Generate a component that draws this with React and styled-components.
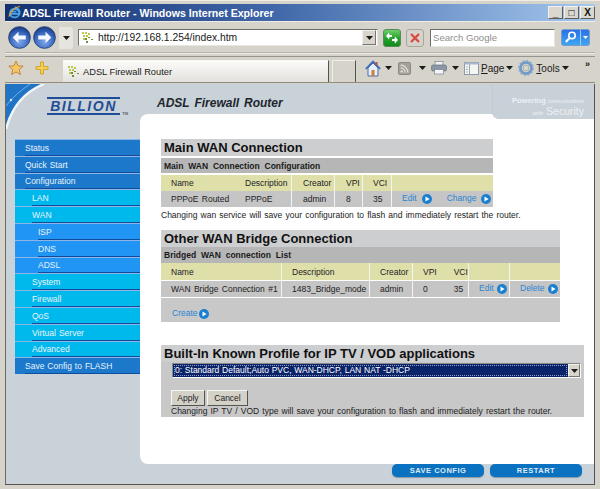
import React from 'react'
import styled, { createGlobalStyle } from 'styled-components'

const Global = createGlobalStyle`
  html, body { margin: 0; padding: 0; background: #d6d3cb; }
  * { box-sizing: border-box; }
`

const sans = `"Liberation Sans", Arial, sans-serif`

function Favicon() {
  return (
    <svg width="12" height="12" viewBox="0 0 12 12">
      <g fill="#b9c94a">
        <rect x="0" y="0" width="2" height="2" /><rect x="3" y="0" width="2" height="2" /><rect x="6" y="1" width="2" height="2" />
        <rect x="1" y="3" width="2" height="2" /><rect x="4" y="3" width="2" height="2" /><rect x="1" y="6" width="2" height="2" />
      </g>
      <g fill="#6f8f3a">
        <rect x="3" y="6" width="2" height="2" /><rect x="6" y="5" width="2" height="1" /><rect x="4" y="9" width="2" height="2" /><rect x="9" y="7" width="2" height="1" />
      </g>
    </svg>
  )
}

function RoundArrow({ dir }) {
  const d = dir === 'back' ? 'M4.5 11 L10 5.5 V9 H17 V13 H10 V16.5 Z' : 'M17.5 11 L12 5.5 V9 H5 V13 H12 V16.5 Z'
  return (
    <svg width="23" height="23" viewBox="0 0 22 22">
      <defs>
        <radialGradient id={`nav-${dir}`} cx="50%" cy="70%" r="65%">
          <stop offset="0" stopColor="#7fa6e8" />
          <stop offset="0.6" stopColor="#3f6fc4" />
          <stop offset="1" stopColor="#1c3f8c" />
        </radialGradient>
      </defs>
      <circle cx="11" cy="11" r="10.4" fill={`url(#nav-${dir})`} stroke="#28406f" strokeWidth="0.8" />
      <path d={d} fill="#f4f7fc" />
    </svg>
  )
}

function Refresh() {
  return (
    <svg width="18" height="18" viewBox="0 0 18 18">
      <defs>
        <linearGradient id="go" x1="0" y1="0" x2="0" y2="1">
          <stop offset="0" stopColor="#74d06c" />
          <stop offset="0.5" stopColor="#26a52c" />
          <stop offset="1" stopColor="#0f8a1c" />
        </linearGradient>
      </defs>
      <rect x="0.5" y="0.5" width="17" height="17" rx="2.5" fill="url(#go)" stroke="#5a8a5a" />
      <path d="M3 7 L6 3.5 L6.5 6 H9 V8 H6.5 L6 10.5 Z M15 11 L12 14.5 L11.5 12 H9 V10 H11.5 L12 7.5 Z" fill="#fff" />
    </svg>
  )
}

function Stop() {
  return (
    <svg width="18" height="18" viewBox="0 0 18 18">
      <rect x="0.5" y="0.5" width="17" height="17" rx="2.5" fill="#d6d2cc" stroke="#a9a59d" />
      <path d="M5 5 L13 13 M13 5 L5 13" stroke="#d9483c" strokeWidth="2.2" />
    </svg>
  )
}

function SearchGo() {
  return (
    <svg width="29" height="17" viewBox="0 0 29 17">
      <defs>
        <linearGradient id="sg" x1="0" y1="0" x2="0" y2="1">
          <stop offset="0" stopColor="#2a6fe8" />
          <stop offset="1" stopColor="#3ea8f0" />
        </linearGradient>
      </defs>
      <rect x="0.5" y="0.5" width="28" height="16" rx="2" fill="url(#sg)" stroke="#7a9ccc" />
      <path d="M19.5 0.5 V16.5" stroke="#a8c8ee" />
      <circle cx="11" cy="6.5" r="3.2" fill="none" stroke="#fff" strokeWidth="1.6" />
      <path d="M8.6 9 L4.8 13" stroke="#fff" strokeWidth="2" />
      <path d="M22 7 H27 L24.5 10 Z" fill="#fff" />
    </svg>
  )
}

function Star() {
  return (
    <svg width="16" height="16" viewBox="0 0 16 16">
      <path d="M8 1 L10 5.8 L15.2 6.2 L11.2 9.5 L12.5 14.6 L8 11.9 L3.5 14.6 L4.8 9.5 L0.8 6.2 L6 5.8 Z" fill="#f5c76a" stroke="#c4802a" strokeWidth="0.9" />
    </svg>
  )
}

function Plus() {
  return (
    <svg width="14" height="14" viewBox="0 0 14 14">
      <path d="M5.5 1 H8.5 V5.5 H13 V8.5 H8.5 V13 H5.5 V8.5 H1 V5.5 H5.5 Z" fill="#f7cf4e" stroke="#c99a24" strokeWidth="0.8" />
    </svg>
  )
}

function Home() {
  return (
    <svg width="16" height="17" viewBox="0 0 16 17">
      <path d="M3 8 V16 H13 V8 L8 3 Z" fill="#e8eef8" stroke="#4a6aa8" />
      <path d="M0.8 9 L8 1.5 L15.2 9" fill="none" stroke="#3f6cb8" strokeWidth="1.8" />
      <rect x="6.5" y="10" width="3" height="6" fill="#c9803a" />
      <rect x="10.5" y="2" width="2" height="3.5" fill="#b8523a" />
    </svg>
  )
}

function Feed() {
  return (
    <svg width="13" height="13" viewBox="0 0 13 13">
      <rect x="0.5" y="0.5" width="12" height="12" rx="1.5" fill="#a5a29b" stroke="#8d8a83" />
      <circle cx="3.8" cy="9.4" r="1.2" fill="#e3e1db" />
      <path d="M2.6 5.8 A4.6 4.6 0 0 1 7.2 10.4 M2.6 3.2 A7.2 7.2 0 0 1 9.8 10.4" fill="none" stroke="#e3e1db" strokeWidth="1.2" />
    </svg>
  )
}

function Printer() {
  return (
    <svg width="16" height="14" viewBox="0 0 16 14">
      <rect x="4" y="0.5" width="8" height="4" fill="#eef0f2" stroke="#7d8792" strokeWidth="0.7" />
      <rect x="0.5" y="4" width="15" height="6" rx="1.5" fill="#8c97a5" stroke="#687280" strokeWidth="0.7" />
      <rect x="3.5" y="8.5" width="9" height="4.5" fill="#f4f5f7" stroke="#7d8792" strokeWidth="0.7" />
    </svg>
  )
}

function PageIcon() {
  return (
    <svg width="15" height="13" viewBox="0 0 15 13">
      <rect x="0.5" y="0.5" width="14" height="12" fill="#f5f5f2" stroke="#8f9aa8" />
      <rect x="0.5" y="0.5" width="14" height="2" fill="#a9b8cc" />
      <path d="M5.5 2.5 V12.5" stroke="#9aa5b2" />
      <path d="M2 5 H4 M2 7.5 H4 M2 10 H4" stroke="#a9b2bc" />
    </svg>
  )
}

function Gear() {
  return (
    <svg width="16" height="16" viewBox="0 0 16 16">
      <circle cx="8" cy="8" r="5.6" fill="none" stroke="#6f98c8" strokeWidth="2.6" />
      <circle cx="8" cy="8" r="7" fill="none" stroke="#8aa8cc" strokeWidth="1.8" strokeDasharray="2 1.66" />
      <circle cx="8" cy="8" r="3" fill="#d6d3cb" stroke="#8d9aa8" strokeWidth="0.6" />
    </svg>
  )
}

function Caret() {
  return (
    <svg width="7" height="4" viewBox="0 0 7 4"><path d="M0 0 H7 L3.5 4 Z" fill="#1c1c1c" /></svg>
  )
}

function GoDot() {
  return (
    <svg width="10" height="10" viewBox="0 0 10 10">
      <circle cx="5" cy="5" r="5" fill="#1a7fd0" />
      <path d="M3.5 2.4 L7.6 5 L3.5 7.6 Z" fill="#fff" />
    </svg>
  )
}

function Swoosh() {
  return (
    <svg width="42" height="46" viewBox="0 0 42 46">
      <path d="M0 0 H38 C18 8 6 22 0 45 Z" fill="#1f74c6" />
      <path d="M0 45 C6 22 18 8 38 0" fill="none" stroke="#f2f6fa" strokeWidth="2.4" />
      <path d="M0 22 C6 14 14 7 24 0" fill="none" stroke="#9ecbef" strokeWidth="0.7" />
      <circle cx="5" cy="16" r="1.2" fill="#dcecf8" />
    </svg>
  )
}

const Window = styled.div`
  position: relative;
  width: 600px;
  height: 489px;
  overflow: hidden;
  padding: 3px 5px 0 5px;
  background: #d6d3cb;
  font-family: ${sans};
  border-top: 1px solid #efece6;
`

const TitleBar = styled.div`
  height: 17px;
  display: flex;
  align-items: center;
  gap: 1px;
  padding-left: 3px;
  background: linear-gradient(90deg, #14306f 0%, #3f66a8 45%, #a5c8ee 100%);
`

const TitleText = styled.span`
  flex: 1;
  color: #fff;
  font-size: 10.6px;
  font-weight: bold;
  white-space: nowrap;
`

const WinButton = styled.span`
  width: 15px;
  height: 13px;
  display: flex;
  align-items: center;
  justify-content: center;
  background: #dad7cf;
  border: 1px solid;
  border-color: #f4f2ee #5f5d58 #5f5d58 #f4f2ee;
  color: #111;
  font-size: 10px;
  font-weight: bold;
  line-height: 1;
`

const Toolbar = styled.div`
  height: 32px;
  display: flex;
  align-items: center;
  padding: 1px 0 0 3px;
  border-top: 1px solid #efece6;
  border-bottom: 1px solid #b6b2aa;
  > * { flex-shrink: 0; }
`

const NavGroup = styled.div`
  display: flex;
  align-items: center;
  gap: 2px;
  width: 70px;
`

const Address = styled.div`
  display: flex;
  align-items: center;
  gap: 4px;
  width: 300px;
  height: 17px;
  padding: 0 1px 0 3px;
  background: #fff;
  border: 1px solid;
  border-color: #6f6d68 #e8e6e0 #e8e6e0 #6f6d68;
  color: #1a1a1a;
  font-size: 10.3px;
`

const Url = styled.span`
  flex: 1;
`

const DropButton = styled.span`
  width: ${(p) => p.$w || 14}px;
  height: ${(p) => p.$h || 15}px;
  display: flex;
  align-items: center;
  justify-content: center;
  background: #d8d5cd;
  border: 1px solid;
  border-color: #f2f0eb #77756f #77756f #f2f0eb;
`

const PlainDrop = styled.span`
  width: 14px;
  height: 22px;
  margin-left: 1px;
  display: flex;
  align-items: center;
  justify-content: center;
  background: #e6e4de;
  border-radius: 0 3px 3px 0;
`

const ToolIcons = styled.div`
  display: flex;
  align-items: center;
  gap: 5px;
  margin-left: 5px;
`

const SearchBox = styled.div`
  width: 125px;
  height: 18px;
  margin-left: 6px;
  padding-left: 2px;
  display: flex;
  align-items: center;
  background: #fff;
  border: 1px solid;
  border-color: #6f6d68 #e8e6e0 #e8e6e0 #6f6d68;
  color: #8e8e8e;
  font-size: 9.6px;
`

const SearchSlot = styled.div`
  margin-left: 6px;
  display: flex;
`

const Divider = styled.div`
  height: 4px;
  border-bottom: 1px solid #97948d;
  border-top: 1px solid #efece6;
`

const TabRow = styled.div`
  height: 26px;
  display: flex;
  align-items: center;
  border-bottom: 1px solid #8e8b84;
`

const Favs = styled.div`
  width: 58px;
  flex-shrink: 0;
  display: flex;
  align-items: center;
  gap: 11px;
  padding: 0 0 4px 3px;
`

const Tab = styled.div`
  align-self: stretch;
  width: 266px;
  flex-shrink: 0;
  margin-top: 3px;
  display: flex;
  align-items: center;
  gap: 3px;
  padding-left: 5px;
  border-right: 1px solid #55534f;
  background: linear-gradient(#fbfbfa, #e3e1dc);
  border-top: 1px solid #f8f7f4;
  color: #1a1a1a;
  font-size: 9.3px;
`

const EmptyTab = styled.div`
  align-self: stretch;
  width: 24px;
  flex-shrink: 0;
  margin: 3px 0 0 3px;
  border-right: 1px solid #55534f;
  border-top: 1px solid #f0eee9;
  border-left: 1px solid #f0eee9;
`

const CommandBar = styled.div`
  flex: 1;
  min-width: 0;
  display: flex;
  align-items: center;
  margin-left: 9px;
  padding-bottom: 3px;
  color: #1a1a1a;
  font-size: 10px;
`

const Command = styled.div`
  display: flex;
  align-items: center;
  gap: ${(p) => p.$gap || 4}px;
  margin-right: ${(p) => p.$mr || 5}px;
  u { text-underline-offset: 1px; }
`

const More = styled.span`
  margin-left: auto;
  margin-top: -8px;
  margin-right: 5px;
  font-size: 9px;
  font-weight: bold;
`

const Page = styled.div`
  position: relative;
  width: 590px;
  height: 401px;
  margin-top: 1px;
  display: flex;
  flex-direction: column;
  background: #c9d1d9;
  border-right: 1px solid #55534f;
  border-left: 1px solid #6a6862;
  border-bottom: 1px solid #55534f;
`

const Banner = styled.div`
  height: 30px;
  display: flex;
  align-items: flex-end;
  padding-bottom: 4px;
`

const SwooshSlot = styled.div`
  position: absolute;
  top: 0;
  left: 0;
  line-height: 0;
`

const Logo = styled.div`
  position: relative;
  width: 73px;
  margin: 0 5px -5px 41px;
  border-top: 2px solid #1f4e96;
  border-bottom: 2px solid #1f4e96;
  color: #1f4e96;
  font-size: 14px;
  line-height: 14px;
  font-weight: bold;
  font-style: italic;
  letter-spacing: 1.5px;
  text-align: center;
  white-space: nowrap;
`

const Tm = styled.span`
  position: absolute;
  right: -8px;
  bottom: -3px;
  color: #667;
  font-size: 4px;
  font-style: normal;
  letter-spacing: 0;
  line-height: 5px;
`

const Heading = styled.div`
  margin-left: 32px;
  color: #20262c;
  font-size: 12px;
  font-weight: bold;
  font-style: italic;
  word-spacing: 1.6px;
`

const SecurityTab = styled.div`
  position: absolute;
  top: 0;
  right: 0;
  width: 102px;
  height: 35px;
  padding: 12px 10px 0 0;
  z-index: 2;
  text-align: right;
  color: #eef1f4;
  background: #c8d0d8;
  border-left: 1px solid #c1cad3;
  border-bottom-left-radius: 7px;
  line-height: 9px;
`

const Power = styled.div`
  font-size: 7.5px;
  font-weight: bold;
  white-space: nowrap;
  small { font-size: 5px; font-weight: normal; }
`

const Secure = styled.div`
  font-size: 10.5px;
  line-height: 11px;
  small { font-size: 6px; }
`

const Main = styled.div`
  display: flex;
  height: 350px;
`

const Sidebar = styled.div`
  width: 134px;
  padding: 25px 0 0 9px;
`

const NavRow = styled.div`
  position: relative;
  height: 16.8px;
  padding-left: ${(p) => [10, 17, 23][p.$level]}px;
  display: flex;
  align-items: center;
  background: ${(p) => ['#1b78cb', '#00b9ec', '#2095f3'][p.$level]};
  border-top: 1px solid #8fb5e6;
  color: #e8f3fb;
  font-size: 8.5px;
  word-spacing: 0.6px;
  &::after {
    content: '';
    position: absolute;
    bottom: 0;
    right: 0;
    left: ${(p) => [10, 17, 23][p.$level]}px;
    height: 1px;
    background: #114b9e;
  }
`

const Panel = styled.div`
  flex: 1;
  padding: 25px 0 0 21px;
  background: #fff;
  border-top-left-radius: 8px;
  border-bottom-left-radius: 8px;
  display: flex;
  flex-direction: column;
`

const Section = styled.section`
  width: ${(p) => p.$w}px;
  margin-top: ${(p) => p.$mt || 0}px;
`

const SectionTitle = styled.div`
  height: 17px;
  padding-left: 3px;
  display: flex;
  align-items: center;
  background: #cdcecf;
  color: #111;
  font-size: 13px;
  font-weight: bold;
`

const SubTitle = styled.div`
  height: ${(p) => p.$h || 15}px;
  margin-top: ${(p) => p.$mt || 0}px;
  padding-left: 3px;
  display: flex;
  align-items: center;
  background: #b6b6b6;
  color: #1a1a1a;
  font-size: 8.5px;
  font-weight: bold;
  word-spacing: 2.5px;
`

const Row = styled.div`
  height: ${(p) => p.$h || 16}px;
  margin-top: ${(p) => p.$mt || 0}px;
  display: grid;
  grid-template-columns: ${(p) => p.$cols};
  background: ${(p) => (p.$head ? '#dfdfaa' : '#c5c5c5')};
`

const Cell = styled.div`
  padding-left: ${(p) => p.$pl ?? 10}px;
  display: flex;
  align-items: center;
  gap: ${(p) => p.$gap ?? 3}px;
  color: #222;
  font-size: 8.5px;
  word-spacing: 1px;
  white-space: nowrap;
  border-right: ${(p) => (p.$line ? '1px solid #f4f4f4' : 'none')};
`

const ActionLink = styled.span`
  color: #2a85d4;
  margin-top: -2px;
  margin-left: ${(p) => p.$ml || 0}px;
`

const Spaced = styled.span`
  margin-left: ${(p) => p.$ml}px;
`

const Note = styled.div`
  height: 15px;
  display: flex;
  align-items: center;
  color: #222;
  font-size: 8.5px;
  word-spacing: 0.8px;
  white-space: nowrap;
`

const CreateRow = styled.div`
  height: 24px;
  margin-top: 1px;
  padding: 8px 0 0 11px;
  display: flex;
  align-items: center;
  gap: 1px;
  background: #c8c8c8;
  font-size: 8.5px;
`

const ProfileBody = styled.div`
  height: 55px;
  padding: 1px 3px 0 11px;
  background: #c8c8c8;
`

const Select = styled.div`
  height: 15px;
  display: flex;
  align-items: center;
  background: #0a2369;
  border: 1px solid;
  border-color: #8a8a8a #fafafa #fafafa #8a8a8a;
  padding-left: 1px;
  color: #fff;
  font-size: 8.5px;
  word-spacing: 0.4px;
`

const SelectText = styled.span`
  flex: 1;
  padding-left: 1px;
  line-height: 11px;
  outline: 1px dotted #8f9cc4;
  outline-offset: -1px;
  margin-right: 1px;
`

const Buttons = styled.div`
  display: flex;
  gap: 2px;
  margin-top: 12px;
  margin-left: -1px;
`

const FormButton = styled.span`
  width: ${(p) => p.$w}px;
  height: 16px;
  display: flex;
  align-items: center;
  justify-content: center;
  background: #d4d1c9;
  border: 1px solid;
  border-color: #f6f5f1 #55534f #55534f #f6f5f1;
  color: #222;
  font-size: 8.5px;
`

const ProfileNote = styled.div`
  margin-left: -1px;
  color: #222;
  font-size: 8.5px;
  line-height: 10px;
  word-spacing: 0.75px;
  white-space: nowrap;
`

const Footer = styled.div`
  flex: 1;
  display: flex;
  justify-content: flex-end;
  gap: 6px;
  padding-right: 12px;
`

const BlueButton = styled.span`
  width: 92px;
  height: 13px;
  display: flex;
  align-items: center;
  justify-content: center;
  background: #0b72c2;
  border-radius: 5px;
  box-shadow: 0 1px 1px #8a98a5;
  color: #dfeaf4;
  font-size: 7.5px;
  font-weight: bold;
  letter-spacing: 0.5px;
`

const navItems = [
  ['Status', 0], ['Quick Start', 0], ['Configuration', 0],
  ['LAN', 1], ['WAN', 1], ['ISP', 2], ['DNS', 2], ['ADSL', 2],
  ['System', 1], ['Firewall', 1], ['QoS', 1], ['Virtual Server', 1], ['Advanced', 1],
  ['Save Config to FLASH', 0],
]

const mainCols = '84px 47px 43px 28px 29px 1fr'
const bridgeCols = '121px 88px 43px 56px 41px 50px 1fr'

export default function App() {
  return (
    <Window>
      <Global />
      <TitleBar>
        <svg width="13" height="15" viewBox="0 0 14 15">
          <path d="M7 2 A5.4 5.4 0 1 1 2 9 H12 A5 5 0 0 0 2.5 6.5 H9" fill="none" stroke="#49a5e8" strokeWidth="2" />
          <path d="M1 12 C2 7 8 1 13 1" fill="none" stroke="#e8a32e" strokeWidth="1.2" />
        </svg>
        <TitleText>ADSL Firewall Router - Windows Internet Explorer</TitleText>
        <WinButton>_</WinButton>
        <WinButton>□</WinButton>
        <WinButton>X</WinButton>
      </TitleBar>

      <Toolbar>
        <NavGroup>
          <RoundArrow dir="back" />
          <RoundArrow dir="forward" />
          <PlainDrop><Caret /></PlainDrop>
        </NavGroup>
        <Address>
          <Favicon />
          <Url>http://192.168.1.254/index.htm</Url>
          <DropButton><Caret /></DropButton>
        </Address>
        <ToolIcons>
          <Refresh />
          <Stop />
        </ToolIcons>
        <SearchBox>Search Google</SearchBox>
        <SearchSlot><SearchGo /></SearchSlot>
      </Toolbar>
      <Divider />

      <TabRow>
        <Favs>
          <Star />
          <Plus />
        </Favs>
        <Tab>
          <Favicon />
          ADSL Firewall Router
        </Tab>
        <EmptyTab />
        <CommandBar>
          <Command $mr={6}><Home /><Caret /></Command>
          <Command $gap={8}><Feed /><Caret /></Command>
          <Command $gap={5}><Printer /><Caret /></Command>
          <Command $gap={2}><PageIcon /><span><u>P</u>age</span><Caret /></Command>
          <Command $gap={2} $mr={1}><Gear /><span><u>T</u>ools</span><Caret /></Command>
          <More>»</More>
        </CommandBar>
      </TabRow>

      <Page>
        <SwooshSlot><Swoosh /></SwooshSlot>
        <Banner>
          <Logo>BILLION<Tm>TM</Tm></Logo>
          <Heading>ADSL Firewall Router</Heading>
        </Banner>
        <SecurityTab>
          <Power>Powering <small>communications</small></Power>
          <Secure><small>with</small> Security</Secure>
        </SecurityTab>

        <Main>
          <Sidebar>
            {navItems.map(([label, level]) => (
              <NavRow key={label} $level={level}>{label}</NavRow>
            ))}
          </Sidebar>
          <Panel>
            <Section $w={332}>
              <SectionTitle>Main WAN Connection</SectionTitle>
              <SubTitle $mt={2}>Main WAN Connection Configuration</SubTitle>
              <Row $head $mt={2} $cols={mainCols}>
                <Cell>Name</Cell>
                <Cell $pl={0} $line>Description</Cell>
                <Cell $pl={11} $line>Creator</Cell>
                <Cell $pl={11} $line>VPI</Cell>
                <Cell $pl={10} $line>VCI</Cell>
                <Cell />
              </Row>
              <Row $cols={mainCols}>
                <Cell>PPPoE Routed</Cell>
                <Cell $pl={0} $line>PPPoE</Cell>
                <Cell $pl={11} $line>admin</Cell>
                <Cell $pl={11} $line>8</Cell>
                <Cell $pl={10} $line>35</Cell>
                <Cell $pl={10} $gap={5}>
                  <ActionLink>Edit</ActionLink><GoDot />
                  <ActionLink $ml={10}>Change</ActionLink><GoDot />
                </Cell>
              </Row>
              <Note>Changing wan service will save your configuration to flash and immediately restart the router.</Note>
            </Section>

            <Section $w={399} $mt={8}>
              <SectionTitle>Other WAN Bridge Connection</SectionTitle>
              <SubTitle $h={16}>Bridged WAN connection List</SubTitle>
              <Row $head $h={17} $cols={bridgeCols}>
                <Cell $line>Name</Cell>
                <Cell $line>Description</Cell>
                <Cell $line>Creator</Cell>
                <Cell $line>VPI <Spaced $ml={14}>VCI</Spaced></Cell>
                <Cell $line />
                <Cell />
              </Row>
              <Row $mt={1} $cols={bridgeCols}>
                <Cell $line>WAN Bridge Connection #1</Cell>
                <Cell $line>1483_Bridge_mode</Cell>
                <Cell $line>admin</Cell>
                <Cell $line>0 <Spaced $ml={23}>35</Spaced></Cell>
                <Cell $line $pl={10}><ActionLink>Edit</ActionLink><GoDot /></Cell>
                <Cell $pl={10}><ActionLink>Delete</ActionLink><GoDot /></Cell>
              </Row>
              <CreateRow><ActionLink>Create</ActionLink><GoDot /></CreateRow>
            </Section>

            <Section $w={423} $mt={23}>
              <SectionTitle>Built-In Known Profile for IP TV / VOD applications</SectionTitle>
              <ProfileBody>
                <Select>
                  <SelectText>0: Standard Default;Auto PVC, WAN-DHCP, LAN NAT -DHCP</SelectText>
                  <DropButton $w={12} $h={13}><Caret /></DropButton>
                </Select>
                <Buttons>
                  <FormButton $w={34}>Apply</FormButton>
                  <FormButton $w={41}>Cancel</FormButton>
                </Buttons>
                <ProfileNote>Changing IP TV / VOD type will save your configuration to flash and immediately restart the router.</ProfileNote>
              </ProfileBody>
            </Section>
          </Panel>
        </Main>

        <Footer>
          <BlueButton>SAVE CONFIG</BlueButton>
          <BlueButton>RESTART</BlueButton>
        </Footer>
      </Page>
    </Window>
  )
}
